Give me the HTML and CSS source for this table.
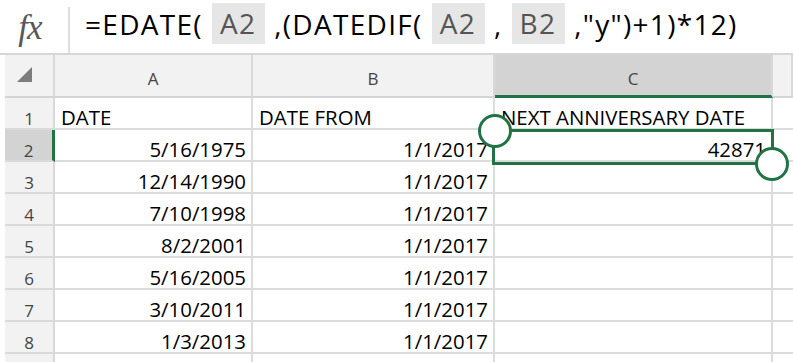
FILE: index.html
```html
<!DOCTYPE html>
<html>
<head>
<meta charset="utf-8">
<link rel="stylesheet" href="styles.css">
</head>
<body>
<div class="fbar">
  <div class="fx"><span>fx</span></div>
  <div class="formula">=EDATE(<span class="ref">A2</span>,(DATEDIF(<span class="ref">A2</span>,<span class="ref">B2</span>,"y")+1)*12)</div>
</div>
<div class="sheet">
  <div class="grid">
    <div class="hd corner"><span class="tri"></span></div>
    <div class="hd col">A</div>
    <div class="hd col">B</div>
    <div class="hd col sel">C</div>
    <div class="hd col"></div>

    <div class="rh">1</div>
    <div class="c">DATE</div>
    <div class="c">DATE FROM</div>
    <div class="c">NEXT ANNIVERSARY DATE</div>
    <div class="c d"></div>

    <div class="rh rsel">2</div>
    <div class="c n">5/16/1975</div>
    <div class="c n">1/1/2017</div>
    <div class="c n">42871</div>
    <div class="c d"></div>

    <div class="rh">3</div>
    <div class="c n">12/14/1990</div>
    <div class="c n">1/1/2017</div>
    <div class="c"></div>
    <div class="c d"></div>

    <div class="rh">4</div>
    <div class="c n">7/10/1998</div>
    <div class="c n">1/1/2017</div>
    <div class="c"></div>
    <div class="c d"></div>

    <div class="rh">5</div>
    <div class="c n">8/2/2001</div>
    <div class="c n">1/1/2017</div>
    <div class="c"></div>
    <div class="c d"></div>

    <div class="rh">6</div>
    <div class="c n">5/16/2005</div>
    <div class="c n">1/1/2017</div>
    <div class="c"></div>
    <div class="c d"></div>

    <div class="rh">7</div>
    <div class="c n">3/10/2011</div>
    <div class="c n">1/1/2017</div>
    <div class="c"></div>
    <div class="c d"></div>

    <div class="rh">8</div>
    <div class="c n">1/3/2013</div>
    <div class="c n">1/1/2017</div>
    <div class="c"></div>
    <div class="c d"></div>

    <div class="rh"></div>
    <div class="c"></div>
    <div class="c"></div>
    <div class="c"></div>
    <div class="c d"></div>
  </div>
  <div class="selbox"></div>
  <div class="handle h1"></div>
  <div class="handle h2"></div>
</div>
</body>
</html>
```
FILE: styles.css
```css
* { box-sizing: border-box; }
html, body { margin: 0; padding: 0; background: #fff; overflow: hidden; }
body { width: 793px; height: 362px; font-family: "Open Sans", sans-serif; }

.fbar {
  height: 55px;
  display: flex;
  border-bottom: 2px solid #d6d6d6;
}
.fx {
  width: 70px;
  margin-top: 7px;
  border-right: 2px solid #dedede;
  display: flex;
  justify-content: center;
}
.fx span {
  font-family: "Liberation Serif", serif;
  font-style: italic;
  font-size: 35px;
  color: #595959;
  line-height: 1;
  margin-top: 3px;
  margin-right: 8px;
  letter-spacing: -1px;
}
.formula {
  padding-left: 15px;
  padding-top: 4px;
  font-size: 28px;
  line-height: 40px;
  color: #000;
  white-space: nowrap;
  letter-spacing: 1.3px;
}
.ref {
  display: inline-block;
  background: #e6e6e6;
  color: #555;
  padding: 0 9px 0 8px;
  margin: 0 9px;
  line-height: 41px;
  height: 41px;
  vertical-align: top;
  margin-top: -1px;
}

.sheet { position: relative; margin-left: 5px; }
.grid {
  display: grid;
  grid-template-columns: 50px 198px 242px 278px 1fr;
  grid-template-rows: 43px repeat(8, 32px) 10px;
  overflow: hidden;
}
.hd {
  background: #f2f2f2;
  border-right: 2px solid #d9d9d9;
  border-bottom: 2px solid #d4d4d4;
  color: #444;
  font-size: 17px;
  line-height: 1;
  display: flex;
  justify-content: center;
  align-items: center;
  padding-top: 6px;
}
.hd.sel {
  background: #d3d3d3;
  border-bottom: 3px solid #217346;
  padding-top: 7px;
}
.corner { position: relative; }
.tri {
  position: absolute;
  left: 12px;
  top: 12px;
  width: 0;
  height: 0;
  border-left: 15px solid transparent;
  border-bottom: 15px solid #7d7d7d;
}
.rh {
  background: #f2f2f2;
  border-right: 2px solid #d9d9d9;
  border-bottom: 2px solid #dadada;
  color: #444;
  font-size: 17px;
  line-height: 1;
  display: flex;
  justify-content: center;
  align-items: flex-end;
  padding-bottom: 1px;
}
.rh.rsel {
  background: #d3d3d3;
  border-right: 3px solid #217346;
}
.c {
  border-right: 2px solid #dcdcdc;
  border-bottom: 2px solid #dcdcdc;
  font-size: 20.4px;
  line-height: 1;
  color: #000;
  display: flex;
  align-items: flex-end;
  padding: 0 5px 1px 6px;
  white-space: nowrap;
}
.c.n { justify-content: flex-end; padding-right: 5px; }
.c.d { border-right: none; }

.selbox {
  position: absolute;
  left: 487px;
  top: 74px;
  width: 282px;
  height: 36px;
  border: 3px solid #217346;
}
.handle {
  position: absolute;
  width: 34px;
  height: 34px;
  border-radius: 50%;
  border: 3px solid #217346;
  background: #fff;
}
.h1 { left: 473px; top: 59px; }
.h2 { left: 750px; top: 92px; }
```
